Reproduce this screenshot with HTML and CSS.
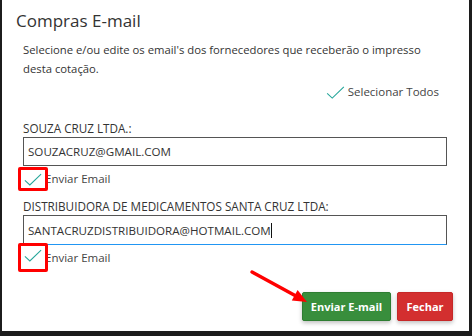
FILE: index.html
```html
<!DOCTYPE html>
<html lang="pt-BR">
<head>
    <meta charset="UTF-8">
    <title>Compras E-mail</title>
    <link rel="stylesheet" href="styles.css">
</head>
<body>

<div class="modal">
    <h4 class="title">Compras E-mail</h4>

    <div class="content">
        <p class="intro">Selecione e/ou edite os email's dos fornecedores que receberão o impresso desta cotação.</p>

        <div class="select-all">
            <svg class="tick" viewBox="0 0 20 14"><path d="M1 8 L6.5 13 L19 1"/></svg>
            Selecionar Todos
        </div>

        <!-- Fornecedor 1 -->
        <div class="supplier first">
            <div class="supplier-name">SOUZA CRUZ LTDA.:</div>
            <div class="field">SOUZACRUZ@GMAIL.COM</div>
            <div class="send-row">
                <span class="check-box"><svg class="tick" viewBox="0 0 20 14"><path d="M1 8 L6.5 13 L19 1"/></svg></span>
                <span class="send-label">Enviar Email</span>
            </div>
        </div>

        <!-- Fornecedor 2 -->
        <div class="supplier">
            <div class="supplier-name">DISTRIBUIDORA DE MEDICAMENTOS SANTA CRUZ LTDA:</div>
            <div class="field focused">SANTACRUZDISTRIBUIDORA@HOTMAIL.COM<span class="caret"></span></div>
            <div class="send-row">
                <span class="check-box tall"><svg class="tick" viewBox="0 0 20 14"><path d="M1 8 L6.5 13 L19 1"/></svg></span>
                <span class="send-label">Enviar Email</span>
            </div>
        </div>
    </div>

    <div class="footer">
        <button class="btn btn-send">Enviar E-mail</button>
        <button class="btn btn-close">Fechar</button>
        <svg class="arrow" viewBox="0 0 60 36">
            <line x1="3" y1="3" x2="46" y2="26.5"/>
            <polygon points="58,33 42.8,31.6 48.6,21"/>
        </svg>
    </div>
</div>

</body>
</html>
```

FILE: styles.css
```css
body {
    margin: 0;
    width: 472px;
    height: 336px;
    background: #1c1c1c;
    font-family: 'Open Sans', 'Liberation Sans', sans-serif;
    color: #333;
    overflow: hidden;
}

.modal {
    position: relative;
    width: 467px;
    height: 331px;
    margin-left: 2px;
    background: #fff;
    box-sizing: border-box;
}

.title {
    margin: 0;
    padding: 9px 0 0 14px;
    font-size: 17px;
    font-weight: 400;
    line-height: 24px;
    color: #333;
}

.content {
    padding: 7px 22px 0 21px;
}

.intro {
    margin: 0;
    max-width: 412px;
    font-size: 11.3px;
    line-height: 19px;
    color: #333;
}

.select-all {
    display: flex;
    align-items: center;
    justify-content: flex-end;
    gap: 3px;
    margin-top: 6px;
    padding-right: 8px;
    font-size: 11.5px;
    line-height: 16px;
    color: #444;
}

.select-all .tick {
    width: 19px;
    height: 13px;
}

.tick path {
    fill: none;
    stroke: #26a69a;
    stroke-width: 1.2;
}

.supplier.first {
    margin-top: 21px;
}

.supplier-name {
    font-size: 11.7px;
    line-height: 14px;
    margin-bottom: 2px;
    color: #333;
}

.field {
    height: 29px;
    border: 1px solid #555;
    box-sizing: border-box;
    padding: 0 4px;
    font-size: 11.6px;
    color: #333;
    display: flex;
    align-items: center;
}

.field.focused {
    height: 30px;
    border-bottom-color: #2196f3;
}

.caret {
    display: inline-block;
    width: 1px;
    height: 15px;
    background: #111;
}

.send-row {
    position: relative;
    display: flex;
    align-items: center;
    height: 25px;
    margin-bottom: 8px;
}

.check-box {
    position: absolute;
    left: -5px;
    top: 1px;
    width: 30px;
    height: 24px;
    border: 3px solid #f00;
    border-radius: 2px;
    box-sizing: border-box;
    display: flex;
    align-items: flex-end;
    justify-content: center;
    padding-bottom: 2px;
}

.check-box.tall {
    top: -2px;
    height: 29px;
    padding-bottom: 7px;
}

.check-box .tick {
    width: 18px;
    height: 13px;
}

.send-label {
    padding-left: 22px;
    font-size: 11.5px;
    color: #444;
}

.footer {
    position: relative;
    display: flex;
    justify-content: flex-end;
    gap: 6px;
    padding: 14px 16px 0 0;
}

.btn {
    height: 29px;
    padding: 0;
    border-radius: 2px;
    font-family: 'Open Sans', 'Liberation Sans', sans-serif;
    font-size: 11px;
    font-weight: 700;
    white-space: nowrap;
    color: #fff;
    box-shadow: 0 2px 4px rgba(0, 0, 0, 0.25);
    cursor: pointer;
}

.btn-send {
    width: 89px;
    background: #388e3c;
    border: 1px solid #2e7d32;
}

.btn-close {
    width: 56px;
    background: #d32f2f;
    border: 1px solid #c62828;
}

.arrow {
    position: absolute;
    left: 247px;
    top: -9px;
    width: 60px;
    height: 36px;
}

.arrow line {
    stroke: #f00;
    stroke-width: 3.5;
    stroke-linecap: round;
}

.arrow polygon {
    fill: #f00;
}
```
